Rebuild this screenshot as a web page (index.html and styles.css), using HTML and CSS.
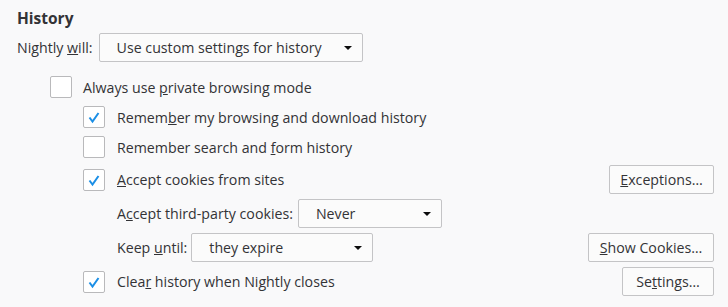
FILE: index.html
```html
<!DOCTYPE html>
<html>
<head>
<meta charset="utf-8">
<link rel="stylesheet" href="styles.css">
</head>
<body>
<div class="page">
  <h2 class="heading">History</h2>
  <div class="row row-top">
    <span class="label">Nightly <u>w</u>ill:</span>
    <div class="select select-history"><span>Use custom settings for history</span><i class="arrow"></i></div>
  </div>
  <div class="indent1">
    <div class="row row-check">
      <span class="box"></span>
      <span class="label">Always use <u>p</u>rivate browsing mode</span>
    </div>
    <div class="indent2">
      <div class="row row-check">
        <span class="box"><svg viewBox="0 0 22 22" width="22" height="22"><polyline points="6.5,11.5 9.5,15.5 15.5,7" /></svg></span>
        <span class="label">Remem<u>b</u>er my browsing and download history</span>
      </div>
      <div class="row row-check">
        <span class="box"></span>
        <span class="label">Remember search and <u>f</u>orm history</span>
      </div>
      <div class="row row-ctl row-first">
        <span class="box"><svg viewBox="0 0 22 22" width="22" height="22"><polyline points="6.5,11.5 9.5,15.5 15.5,7" /></svg></span>
        <span class="label"><u>A</u>ccept cookies from sites</span>
        <span class="spacer"></span>
        <button class="btn btn-exc"><u>E</u>xceptions…</button>
      </div>
      <div class="row row-ctl sub">
        <span class="label">A<u>c</u>cept third-party cookies:</span>
        <div class="select select-never"><span>Never</span><i class="arrow"></i></div>
      </div>
      <div class="row row-ctl sub">
        <span class="label">Keep <u>u</u>ntil:</span>
        <div class="select select-keep"><span>they expire</span><i class="arrow"></i></div>
        <span class="spacer"></span>
        <button class="btn btn-show"><u>S</u>how Cookies…</button>
      </div>
      <div class="row row-ctl">
        <span class="box"><svg viewBox="0 0 22 22" width="22" height="22"><polyline points="6.5,11.5 9.5,15.5 15.5,7" /></svg></span>
        <span class="label">Clea<u>r</u> history when Nightly closes</span>
        <span class="spacer"></span>
        <button class="btn btn-set">Se<u>t</u>tings…</button>
      </div>
    </div>
  </div>
</div>
</body>
</html>
```
FILE: styles.css
```css
html, body {
  margin: 0;
  padding: 0;
  background: #f9f9fa;
}
body {
  font-family: "Open Sans", "Noto Sans", sans-serif;
  font-size: 14.2px;
  color: #333336;
}
.page {
  padding: 7px 14px 0 17px;
}
.heading {
  margin: 0 0 3px 0;
  font-size: 15.5px;
  line-height: 23px;
  font-weight: 700;
  color: #333336;
}
.row {
  display: flex;
  align-items: center;
}
.row-top {
  height: 29px;
}
.row-top .select {
  margin-left: 6px;
}
.select {
  box-sizing: border-box;
  height: 29px;
  border: 1px solid #c4c4c6;
  border-radius: 2px;
  background: #fbfbfb;
  display: flex;
  align-items: center;
  padding-left: 17px;
  padding-right: 10px;
}
.select span {
  flex: 1;
  white-space: nowrap;
}
.arrow {
  width: 0;
  height: 0;
  border-left: 4px solid transparent;
  border-right: 4px solid transparent;
  border-top: 4px solid #0c0c0d;
}
.select-history { width: 264px; }
.select-never { width: 144px; margin-left: 5px; }
.select-keep { width: 182px; margin-left: 4px; }
.indent1 {
  margin-top: 10px;
  padding-left: 33px;
}
.indent2 {
  padding-left: 33px;
}
.row-check {
  height: 30px;
}
.row-ctl {
  height: 29px;
  margin-top: 5px;
}
.row-first {
  margin-top: 3px;
}
.sub {
  padding-left: 34px;
}
.box {
  box-sizing: border-box;
  width: 22px;
  height: 22px;
  border: 1px solid #b9b9bb;
  border-radius: 2px;
  background: #fff;
  margin-right: 11px;
  flex: none;
  display: block;
  position: relative;
}
.box svg {
  position: absolute;
  left: -1px;
  top: -1px;
}
.box polyline {
  fill: none;
  stroke: #1b8fe6;
  stroke-width: 2;
}
.indent2 .box {
  margin-right: 12px;
}
.label {
  white-space: nowrap;
}
.spacer {
  flex: 1;
}
.btn {
  box-sizing: border-box;
  height: 29px;
  border: 1px solid #c4c4c6;
  border-radius: 2px;
  background: #fbfbfb;
  font-family: inherit;
  font-size: 14.2px;
  color: #333336;
  padding: 0;
  margin: 0;
  white-space: nowrap;
  text-align: center;
}
.btn-exc { width: 105px; }
.btn-show { width: 126px; }
.btn-set { width: 92px; }
```
